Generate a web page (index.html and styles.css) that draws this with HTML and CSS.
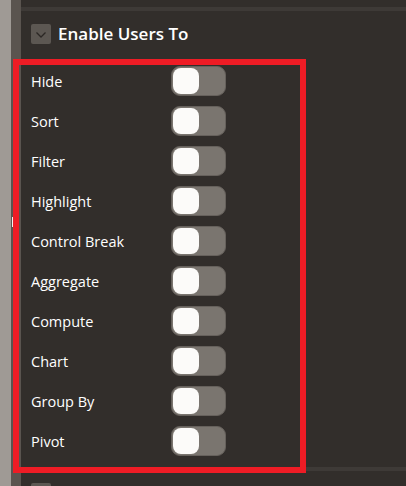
FILE: index.html
```html
<!DOCTYPE html>
<html>
<head>
<meta charset="utf-8">
<link rel="stylesheet" href="styles.css">
</head>
<body>
<div class="rail-light"></div>
<div class="rail-dark"><span class="grip"></span></div>
<main class="panel">
  <div class="divider"></div>
  <div class="section-head">
    <span class="chev"><svg width="20" height="20" viewBox="0 0 20 20"><path d="M5.5 8.5 L10 13 L14.5 8.5" fill="none" stroke="#2b2724" stroke-width="1.3"/></svg></span>
    <span class="title">Enable Users To</span>
  </div>
  <ul class="list">
    <li class="row"><span class="label">Hide</span><span class="toggle"><span class="knob"></span></span></li>
    <li class="row"><span class="label">Sort</span><span class="toggle"><span class="knob"></span></span></li>
    <li class="row"><span class="label">Filter</span><span class="toggle"><span class="knob"></span></span></li>
    <li class="row"><span class="label">Highlight</span><span class="toggle"><span class="knob"></span></span></li>
    <li class="row"><span class="label">Control Break</span><span class="toggle"><span class="knob"></span></span></li>
    <li class="row"><span class="label">Aggregate</span><span class="toggle"><span class="knob"></span></span></li>
    <li class="row"><span class="label">Compute</span><span class="toggle"><span class="knob"></span></span></li>
    <li class="row"><span class="label">Chart</span><span class="toggle"><span class="knob"></span></span></li>
    <li class="row"><span class="label">Group By</span><span class="toggle"><span class="knob"></span></span></li>
    <li class="row"><span class="label">Pivot</span><span class="toggle"><span class="knob"></span></span></li>
  </ul>
  <div class="divider bottom"></div>
  <div class="section-head next">
    <span class="chev"></span>
  </div>
</main>
<div class="highlight-box"></div>
</body>
</html>
```
FILE: styles.css
```css
html, body {
  margin: 0;
  padding: 0;
}
body {
  display: flex;
  width: 406px;
  height: 486px;
  overflow: hidden;
  background: #322e2b;
  font-family: "Open Sans", "Noto Sans", sans-serif;
  color: #ffffff;
  position: relative;
}
.rail-light {
  width: 11px;
  flex: none;
  background: #9f9a95;
}
.rail-dark {
  width: 10px;
  flex: none;
  background: #5a544f;
  position: relative;
}
.grip {
  position: absolute;
  left: 1px;
  top: 217px;
  width: 2px;
  height: 10px;
  background: #f4f2f0;
}
.panel {
  flex: 1;
  padding-top: 7px;
  display: flex;
  flex-direction: column;
}
.panel > * {
  flex: none;
}
.divider {
  height: 4px;
  background: #3e3a37;
}
.section-head {
  display: flex;
  align-items: center;
  gap: 7px;
  margin-top: 13px;
  padding-left: 10px;
  height: 20px;
}
.chev {
  width: 20px;
  height: 20px;
  flex: none;
  border-radius: 2px;
  background: #5c5752;
  display: flex;
}
.title {
  font-size: 17px;
  font-weight: 600;
  line-height: 20px;
}
.list {
  list-style: none;
  margin: 17px 0 0;
  padding: 0 0 0 10px;
}
.row {
  height: 40px;
  display: flex;
  align-items: center;
}
.label {
  width: 140px;
  font-size: 14.5px;
}
.toggle {
  width: 55px;
  height: 30px;
  box-sizing: border-box;
  border-radius: 9px;
  background: #7a756f;
  border: 1px solid #66615c;
  padding: 1px;
  display: flex;
  align-items: center;
}
.knob {
  width: 26px;
  height: 26px;
  border-radius: 8px;
  background: #fcfbf9;
}
.divider.bottom {
  margin-top: 6px;
}
.section-head.next {
  margin-top: 12px;
}
.highlight-box {
  position: absolute;
  left: 13px;
  top: 59px;
  width: 293px;
  height: 414px;
  box-sizing: border-box;
  border: 6px solid #ee1c25;
}
```
